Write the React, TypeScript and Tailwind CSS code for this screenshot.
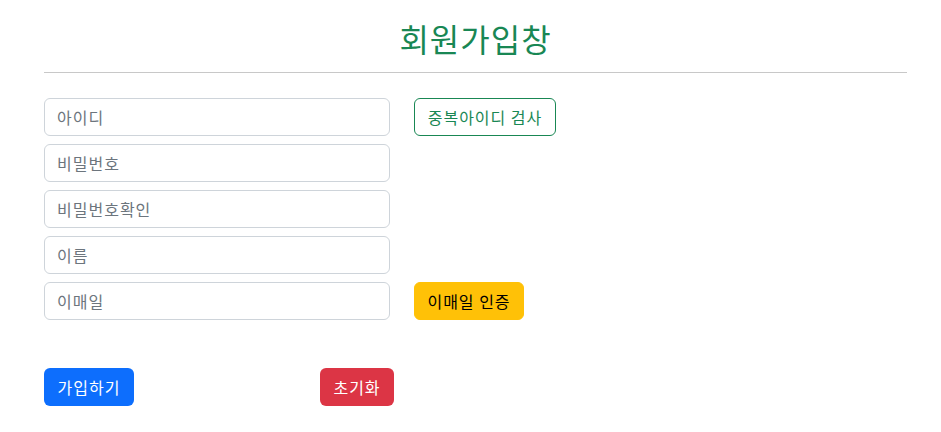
export default function App() {
  const fields = [
    { ph: "아이디", btn: "check" },
    { ph: "비밀번호" },
    { ph: "비밀번호확인" },
    { ph: "이름" },
    { ph: "이매일", btn: "email" },
  ];

  return (
    <div
      className="min-h-screen bg-white pl-[44px] pr-[34px] text-[16px] text-[#212529]"
      style={{ fontFamily: '"Noto Sans CJK KR", "Noto Sans", sans-serif' }}
    >
      <h1 className="pt-[14px] text-center text-[32px] leading-[48px] font-normal tracking-[1px] text-[#198754]">
        회원가입창
      </h1>
      <hr className="mt-[10px] border-t border-[#c8c8c8]" />

      <div className="mt-[25px] flex flex-col gap-[8px]">
        {fields.map((f) => (
          <div key={f.ph} className="flex items-center gap-[24px]">
            <input
              type={f.ph.startsWith("비밀") ? "password" : "text"}
              placeholder={f.ph}
              className="h-[38px] w-[346px] rounded-[6px] border border-[#ced4da] px-[12px] text-[16px] tracking-[1px] placeholder:text-[#6c757d] outline-none"
            />
            {f.btn === "check" && (
              <button className="h-[38px] w-[142px] rounded-[6px] border border-[#198754] text-[16px] tracking-[1px] text-[#198754]">
                중복아이디 검사
              </button>
            )}
            {f.btn === "email" && (
              <button className="h-[38px] w-[110px] rounded-[6px] border border-[#ffc107] bg-[#ffc107] text-[16px] tracking-[1px] text-black">
                이매일 인증
              </button>
            )}
          </div>
        ))}
      </div>

      <div className="mt-[48px] flex w-[350px] justify-between">
        <button className="h-[38px] w-[90px] rounded-[6px] bg-[#0d6efd] text-[16px] tracking-[1px] text-white">
          가입하기
        </button>
        <button className="h-[38px] w-[74px] rounded-[6px] bg-[#dc3545] text-[16px] tracking-[1px] text-white">
          초기화
        </button>
      </div>
    </div>
  );
}
